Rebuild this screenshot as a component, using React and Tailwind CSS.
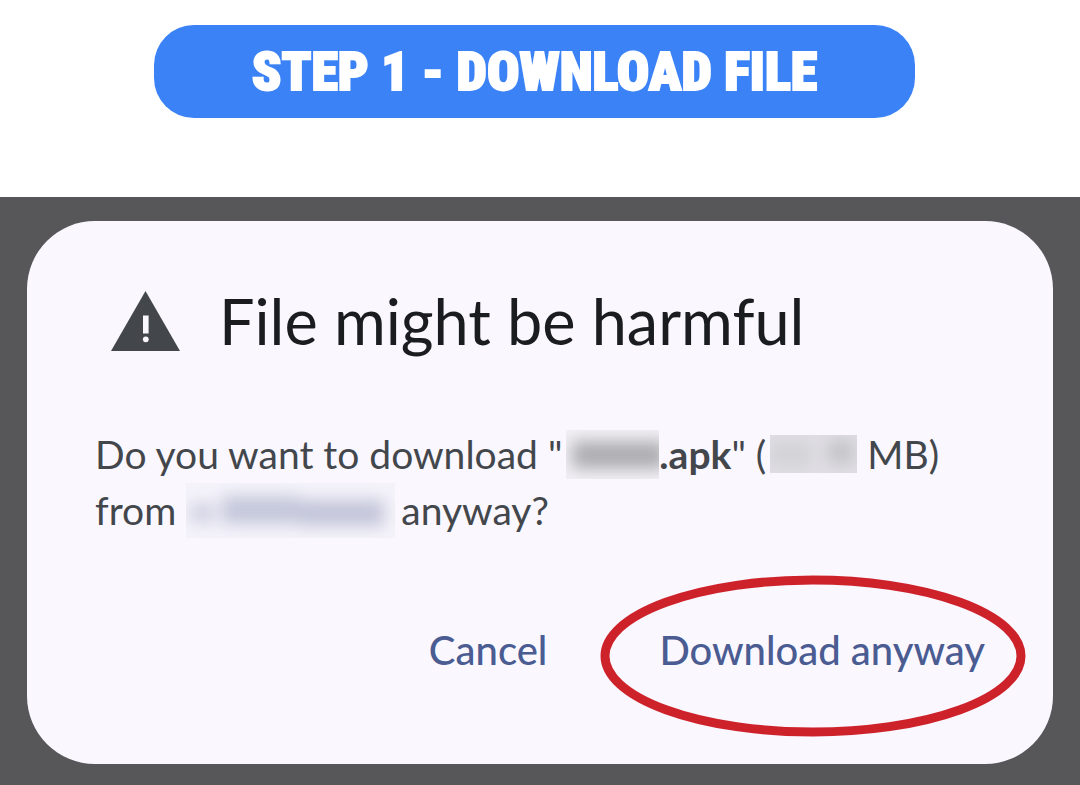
const WarningIcon = () => (
  <svg viewBox="0 0 70 60" aria-hidden="true" className="w-[70px] h-[60px] shrink-0">
    <path d="M34.5 0L69 60H0Z" fill="#43474c" />
    <rect x="32" y="24.5" width="5.6" height="18" fill="#faf7ff" />
    <circle cx="34.8" cy="48.3" r="2.9" fill="#faf7ff" />
  </svg>
);

// Marker ring around the confirm button
const Ring = () => (
  <svg
    viewBox="0 0 430 166"
    aria-hidden="true"
    className="pointer-events-none absolute top-1/2 left-1/2 mt-1.5 -ml-2 h-[166px] w-[430px] max-w-none -translate-x-1/2 -translate-y-1/2"
  >
    <defs>
      <filter id="soft">
        <feGaussianBlur stdDeviation="0.7" />
      </filter>
    </defs>
    <ellipse cx="214" cy="83" rx="208" ry="76" fill="none" stroke="#ce232c" strokeWidth="9" filter="url(#soft)" />
  </svg>
);

const FileNameMask = () => (
  <svg viewBox="0 0 93 49" aria-hidden="true" className="ml-1 h-[49px] w-[93px] shrink-0">
    <defs>
      <filter id="nameBlur" x="-50%" y="-100%" width="200%" height="300%" colorInterpolationFilters="sRGB">
        <feGaussianBlur stdDeviation="8" />
      </filter>
    </defs>
    <rect width="93" height="49" fill="#f3f1f7" />
    <rect x="6" y="11" width="94" height="28" fill="#aeaeb1" filter="url(#nameBlur)" />
  </svg>
);

const SizeMask = () => (
  <svg viewBox="0 0 87 38" aria-hidden="true" className="ml-1 h-[38px] w-[87px] shrink-0">
    <defs>
      <filter id="sizeBlur" x="-50%" y="-100%" width="200%" height="300%" colorInterpolationFilters="sRGB">
        <feGaussianBlur stdDeviation="8" />
      </filter>
    </defs>
    <rect width="87" height="38" fill="#e1dfe5" />
    <g filter="url(#sizeBlur)">
      <rect x="0" y="6" width="42" height="26" fill="#d2d2d7" />
      <rect x="58" y="5" width="26" height="24" fill="#c3c3c8" />
    </g>
  </svg>
);

const HostMask = () => (
  <svg viewBox="0 0 209 55" aria-hidden="true" className="h-[55px] w-[209px] shrink-0">
    <defs>
      <filter id="hostBlur" x="-30%" y="-100%" width="160%" height="300%" colorInterpolationFilters="sRGB">
        <feGaussianBlur stdDeviation="8" />
      </filter>
    </defs>
    <rect width="209" height="55" fill="#f5f3fa" />
    <g filter="url(#hostBlur)">
      <rect x="4" y="20" width="24" height="20" fill="#cfd1e2" />
      <rect x="36" y="13" width="78" height="28" fill="#c4c7da" />
      <rect x="114" y="17" width="84" height="26" fill="#c2c5d9" />
    </g>
  </svg>
);

const App = () => {
  return (
    <div className="flex min-h-screen flex-col bg-white">
      <header className="pt-[25px] pr-[165px] pb-[79px] pl-[154px]">
        <h1 className="flex h-[93px] items-center justify-center rounded-[40px] bg-[#3b82f6] font-[Impact,'Roboto_Condensed',sans-serif] text-[54px] font-black whitespace-nowrap text-white [-webkit-text-stroke:2px_white]">
          STEP 1 - DOWNLOAD FILE
        </h1>
      </header>

      <main className="flex-1 bg-[#575759] px-[27px] pt-6 pb-[21px]">
        <section className="rounded-[68px] bg-[#faf7ff] px-[68px] pt-[60px] pb-[86px] font-[Lato,sans-serif]">
          <div className="flex items-center gap-[38px] pl-4">
            <WarningIcon />
            <h2 className="text-[63px] leading-[80px] whitespace-nowrap text-[#1a1c20]">File might be harmful</h2>
          </div>

          <div className="mt-[65px] text-[39px] leading-[56px] whitespace-pre text-[#43474c]">
            <p className="flex h-14 items-center">
              <span>{'Do you want to download "'}</span>
              <FileNameMask />
              <b className="font-bold">.apk</b>
              <span>{'" ('}</span>
              <SizeMask />
              <span>{' MB)'}</span>
            </p>
            <p className="flex h-14 items-center">
              <span>{'from '}</span>
              <HostMask />
              <span className="ml-1.5">anyway?</span>
            </p>
          </div>

          <div className="mt-[84px] flex items-center justify-end gap-28 text-[40px] leading-[56px] text-[#4a5c92]">
            <button className="font-medium">Cancel</button>
            <button className="relative font-medium whitespace-nowrap">
              Download anyway
              <Ring />
            </button>
          </div>
        </section>
      </main>
    </div>
  );
};

export default App;
